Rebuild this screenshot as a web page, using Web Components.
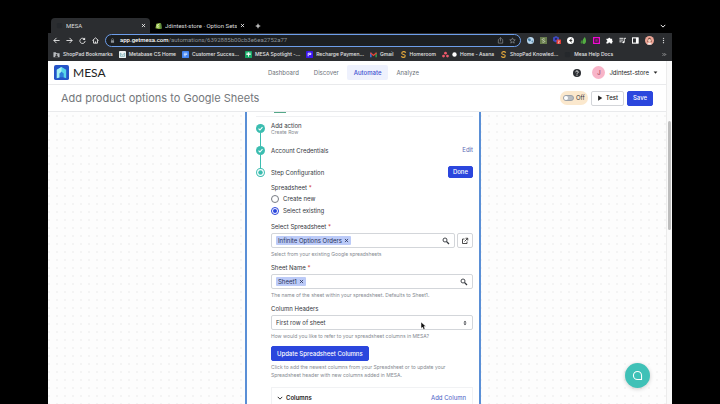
<!DOCTYPE html>
<html lang="en">
<head>
<meta charset="utf-8">
<title>MESA</title>
<style>
  body {
    margin:0;
    background:#000;
    font-family:Inter, "Liberation Sans", sans-serif;
    font-size:6px;
    line-height:10px;
    color:#33373d;
  }
</style>
</head>
<body>
<browser-window></browser-window>

<script>
const icons = {
  back: '<path d="M15 8H2M8 2L2 8l6 6" fill="none" stroke="currentColor" stroke-width="2"/>',
  forward: '<path d="M1 8h13M8 2l6 6-6 6" fill="none" stroke="currentColor" stroke-width="2"/>',
  reload: '<path d="M13 5.500A6 6 0 1 0 14 9" fill="none" stroke="currentColor" stroke-width="2"/><path d="M14 1v6H8z" fill="currentColor"/>',
  home: '<path d="M1 8l7-6 7 6M3.500 7v7h9V7M8 14v-4" fill="none" stroke="currentColor" stroke-width="2"/>',
  lock: '<rect x="3" y="7" width="10" height="8" rx="1" fill="currentColor"/><path d="M5 7V5a3 3 0 0 1 6 0v2" fill="none" stroke="currentColor" stroke-width="2"/>',
  share: '<path d="M5 6H3v8h10V6h-2M8 10V2M5 4l3-3 3 3" fill="none" stroke="currentColor" stroke-width="1.500"/>',
  star: '<path d="M8 2l1.800 4.200 4.500.3-3.400 3 1 4.500L8 11.600 4.100 14l1-4.500-3.400-3 4.500-.3z" fill="none" stroke="currentColor" stroke-width="1.500"/>',
  close: '<path d="M3 3l10 10M13 3L3 13" stroke="currentColor" stroke-width="2.500"/>',
  plus: '<path d="M8 2v12M2 8h12" stroke="currentColor" stroke-width="2.500"/>',
  down: '<path d="M2 5l6 6 6-6" fill="none" stroke="currentColor" stroke-width="2.500"/>',
  caret: '<path d="M2 5h12l-6 7z" fill="currentColor"/>',
  folder: '<path d="M1 3h5l2 2h7v9H1z" fill="#b9bcc0"/><circle cx="8" cy="9" r="2" fill="#333"/><path d="M4.500 14a3.500 3 0 0 1 7 0z" fill="#333"/>',
  mail: '<rect width="16" height="16" rx="1" fill="#eef3f4"/><path d="M3 5l5 4 5-4M3 5v7h10V5" fill="none" stroke="#5a9ca5" stroke-width="1.500"/>',
  doc: '<rect width="16" height="16" rx="2" fill="#4285f4"/><path d="M4 5h8M4 8h8M4 11h5" stroke="#fff" stroke-width="1.500"/>',
  sheet: '<rect width="16" height="16" rx="2" fill="#16a765"/><path d="M8 3v10M3 8h10M3 5h10" stroke="#fff" stroke-width="2"/>',
  recharge: '<rect width="16" height="16" rx="2" fill="#3b16ee"/><path d="M5 12V5h6v3H7" fill="none" stroke="#fff" stroke-width="2"/>',
  gmail: '<path d="M2 14V4" stroke="#4285f4" stroke-width="3"/><path d="M14 14V4" stroke="#34a853" stroke-width="3"/><path d="M1 4l7 6 7-6" fill="none" stroke="#ea4335" stroke-width="3"/>',
  ess: '<path d="M13 4C11 0 4 1 4 5c0 4 8 2 8 6s-7 5-9 1" fill="none" stroke="#e5a93c" stroke-width="2.500"/><path d="M4 15h8" stroke="#e5a93c"/>',
  asana: '<g fill="#f0596a"><circle cx="8" cy="5" r="3.200"/><circle cx="3.500" cy="11.500" r="3.200"/><circle cx="12.500" cy="11.500" r="3.200"/></g>',
  dot: '<circle cx="8" cy="8" r="7" fill="#fff"/>',
  blank: '<rect x="2" y="2" width="12" height="12" rx="3" fill="#25282c"/>',
  shopify: '<path d="M3 4l8-2 3 2 1 11-6 1-8-2z" fill="#95bf47"/><path d="M11 2l3 2 1 11-4 1z" fill="#5e8e3e"/><path d="M9 6c-5-1-4 3-2 4s0 3-3 1" fill="none" stroke="#fff" stroke-width="1.500"/>',
  globe: '<circle cx="8" cy="8" r="8" fill="#b9d6ec"/><path d="M3 3l5 1 1 4-3 2-4-3zM10 9l4-1-2 5z" fill="#45799c"/>',
  square: '<rect width="16" height="16" fill="#667b4c"/><path d="M11 5c-2-2-6-1-6 1s6 2 6 4-4 3-6 1" fill="none" stroke="#e8eedb" stroke-width="1.500"/>',
  badge: '<path d="M6 0l6 3v7l-6 3-6-3V3z" fill="#3e49bd"/><circle cx="6" cy="6" r="2" fill="#171b50"/><rect x="7" y="7" width="9" height="9" rx="1" fill="#e23c37"/><path d="M10 10h3l-3 4h3" stroke="#fff" fill="none"/>',
  chat: '<circle cx="8" cy="8" r="8" fill="#fff"/><path d="M11 4L6 8l5 4M6 8h6" fill="none" stroke="#222" stroke-width="2"/>',
  leaf: '<path d="M11 0c4 6 4 15-2 16C4 16 4 8 11 0z" fill="#54ae43"/><path d="M5 6c-5 5-4 9 0 9z" fill="#3e8933"/>',
  frame: '<rect x="1.500" y="1.500" width="13" height="13" fill="#23121f" stroke="#ed0bd0" stroke-width="3"/><path d="M5 5h6v6H5z" fill="#8b247c"/>',
  puzzle: '<path d="M1 4h4a2.500 2.500 0 0 1 5 0h4v4a2.500 2.500 0 0 1 0 4v3h-4a2 2 0 0 0-5 0H1v-4a2 2 0 0 0 0-4z" fill="#fff"/>',
  playlist: '<path d="M1 3h9M1 7h8M1 11h5M12 12V3h4" fill="none" stroke="#fff" stroke-width="2"/><circle cx="10" cy="12" r="2.500" fill="#fff"/>',
  panel: '<rect x="1" y="2" width="13" height="12" fill="none" stroke="#fff" stroke-width="2.500"/><path d="M9 2h5v12H9z" fill="#fff"/>',
  face: '<circle cx="8" cy="8" r="8" fill="#eda596"/><path d="M5 6c1-4 5-4 6 0l1 5-2-1V7H6v3l-2 1z" fill="#73483d"/><circle cx="8" cy="8" r="2.500" fill="#f5d2c0"/><path d="M4 15c1-4 7-4 8 0z" fill="#f0f0f0"/>',
  more: '<g fill="#ddd"><circle cx="8" cy="3" r="1.500"/><circle cx="8" cy="8" r="1.500"/><circle cx="8" cy="13" r="1.500"/></g>',
  chevrons: '<path d="M2 4l4 4-4 4M8 4l4 4-4 4" fill="none" stroke="#ddd" stroke-width="2"/>',
  logo: '<rect width="16" height="16" rx="2" fill="#2554c7"/><path d="M3 5l5-3 5 3v9l-3-1V9H6v4l-3 1z" fill="#58d6e8"/><path d="M3 5l5-3v7H6v4l-3 1z" fill="#a5f0f2"/><path d="M6 9l2-2 2 2v4H6z" fill="#2d7edb"/>',
  help: '<circle cx="8" cy="8" r="8" fill="#2c2f33"/><path d="M5.500 6.500c0-4 5.500-3 5 0C10 8 8 8 8 9.500" fill="none" stroke="#fff" stroke-width="1.800"/><circle cx="8" cy="12.200" r="1.200" fill="#fff"/>',
  play: '<path d="M3 1l11 7-11 7z" fill="currentColor"/>',
  check: '<circle cx="8" cy="8" r="8" fill="#3bbdb0"/><path d="M4.500 8.200l2.500 2.500 4.500-5" fill="none" stroke="#fff" stroke-width="2"/>',
  current: '<circle cx="8" cy="8" r="7" fill="#fff" stroke="#3bbdb0" stroke-width="1.800"/><circle cx="8" cy="8" r="4" fill="#3bbdb0"/>',
  search: '<circle cx="6" cy="6" r="4" fill="none" stroke="currentColor" stroke-width="1.800"/><path d="M9 9l5 5" stroke="currentColor" stroke-width="2.500"/>',
  external: '<path d="M7 4H3v9h9V9M9 2.500h4.500V7M13 3L7 9" fill="none" stroke="currentColor" stroke-width="1.600"/>',
  updown: '<path d="M4 6.500L8 2l4 4.500zM4 9.500L8 14l4-4.500z" fill="currentColor"/>',
  pointer: '<path d="M4 0v13l3-3 2 5 3-1-2-5h4z" fill="#111" stroke="#fff"/>',
  bubble: '<path d="M13 13H8a5 5 0 1 1 5-5z" fill="none" stroke="#fff" stroke-width="1.300" stroke-linejoin="round"/>'
};

// <ui-icon name="search" size="7">
class UiIcon extends HTMLElement {
  constructor() {
    super();
    this.attachShadow({ mode: 'open' });
  }
  connectedCallback() {
    const size = this.getAttribute('size') || 7;
    this.shadowRoot.innerHTML = `
      <style>
        :host { display:inline-flex; flex:none; }
        svg { display:block; }
      </style>
      <svg width="${size}" height="${size}" viewBox="0 0 16 16" aria-hidden="true">${icons[this.getAttribute('name')]}</svg>
    `;
  }
}

class BrowserTab extends HTMLElement {
  constructor() {
    super();
    this.attachShadow({ mode: 'open' });
    this.shadowRoot.innerHTML = `
      <style>
        :host {
          display:flex;
          align-items:center;
          gap:3px;
          box-sizing:border-box;
          width:99px;
          height:15px;
          padding:0 4px 0 5px;
          border-radius:4px 4px 0 0;
          color:#ddd;
        }
        :host([active]) { background:#2b2d30; }
        span { flex:1; overflow:hidden; white-space:nowrap; }
        button { display:flex; padding:0; border:0; background:none; color:#fff; }
      </style>
      <slot name="icon"></slot>
      <span><slot></slot></span>
      <button aria-label="Close tab"><ui-icon name="close" size="5"></ui-icon></button>
    `;
  }
}

class BookmarkLink extends HTMLElement {
  constructor() {
    super();
    this.attachShadow({ mode: 'open' });
  }
  connectedCallback() {
    this.shadowRoot.innerHTML = `
      <style>
        :host { display:block; }
        a { display:flex; align-items:center; gap:3px; color:#e4e4e4; text-decoration:none; white-space:nowrap; }
      </style>
      <a href="#"><ui-icon name="${this.getAttribute('icon')}"></ui-icon><slot></slot></a>
    `;
  }
}

class BrowserChrome extends HTMLElement {
  constructor() {
    super();
    this.attachShadow({ mode: 'open' });
    this.shadowRoot.innerHTML = `
      <style>
        :host { display:block; font-family:Roboto, "Liberation Sans", sans-serif; }
        .tabs { display:flex; align-items:center; padding:18px 6px 0 3px; color:#fff; }
        .tabs .new { margin-left:6px; }
        .tabs .list { margin-left:auto; }
        .toolbar { display:flex; align-items:center; gap:6px; height:14px; padding:0 5px; background:#2b2d30; color:#eee; }
        .toolbar button, .tabs > button { display:flex; padding:0; border:0; background:none; color:inherit; }
        .address {
          flex:1;
          display:flex;
          align-items:center;
          gap:5px;
          box-sizing:border-box;
          height:13px;
          padding:0 4px;
          border:1px solid #6d9eeb;
          border-radius:7px;
          background:#1c1f22;
          color:#8f9499;
        }
        .address .url { flex:1; }
        .address b { color:#fff; font-weight:500; }
        .bookmarks {
          display:flex;
          align-items:center;
          gap:6px;
          height:14px;
          padding:0 5px;
          background:#2b2d30;
          font-family:Inter, "Liberation Sans", sans-serif;
          font-size:5px;
          font-weight:500;
        }
        .bookmarks .end { margin-left:auto; }
      </style>
      <div class="tabs">
        <browser-tab active><ui-icon slot="icon" name="blank"></ui-icon>MESA</browser-tab>
        <browser-tab><ui-icon slot="icon" name="shopify"></ui-icon>Jdintest-store · Option Sets · S</browser-tab>
        <button class="new" aria-label="New tab"><ui-icon name="plus" size="6"></ui-icon></button>
        <button class="list" aria-label="Tab list"><ui-icon name="down" size="6"></ui-icon></button>
      </div>
      <div class="toolbar">
        <button aria-label="Back"><ui-icon name="back"></ui-icon></button>
        <button aria-label="Forward"><ui-icon name="forward"></ui-icon></button>
        <button aria-label="Reload"><ui-icon name="reload"></ui-icon></button>
        <button aria-label="Home"><ui-icon name="home"></ui-icon></button>
        <div class="address">
          <ui-icon name="lock" size="5"></ui-icon>
          <span class="url"><b>app.getmesa.com</b>/automations/6392885b00cb3e6ea2752a77</span>
          <ui-icon name="share"></ui-icon>
          <ui-icon name="star"></ui-icon>
        </div>
        <ui-icon name="globe"></ui-icon>
        <ui-icon name="square"></ui-icon>
        <ui-icon name="badge" size="8"></ui-icon>
        <ui-icon name="chat"></ui-icon>
        <ui-icon name="leaf"></ui-icon>
        <ui-icon name="frame"></ui-icon>
        <ui-icon name="puzzle"></ui-icon>
        <ui-icon name="playlist"></ui-icon>
        <ui-icon name="panel"></ui-icon>
        <ui-icon name="face" size="9"></ui-icon>
        <ui-icon name="more"></ui-icon>
      </div>
      <div class="bookmarks">
        <bookmark-link icon="folder">ShopPad Bookmarks</bookmark-link>
        <bookmark-link icon="mail">Metabase CS Home</bookmark-link>
        <bookmark-link icon="doc">Customer Succes...</bookmark-link>
        <bookmark-link icon="sheet">MESA Spotlight -...</bookmark-link>
        <bookmark-link icon="recharge">Recharge Paymen...</bookmark-link>
        <bookmark-link icon="gmail">Gmail</bookmark-link>
        <bookmark-link icon="ess">Homeroom</bookmark-link>
        <bookmark-link icon="asana"><ui-icon name="dot" size="5"></ui-icon> Home - Asana</bookmark-link>
        <bookmark-link icon="ess">ShopPad Knowled...</bookmark-link>
        <bookmark-link icon="blank">Mesa Help Docs</bookmark-link>
        <ui-icon class="end" name="chevrons" size="5"></ui-icon>
      </div>
    `;
  }
}

class MesaNav extends HTMLElement {
  constructor() {
    super();
    this.attachShadow({ mode: 'open' });
    this.shadowRoot.innerHTML = `
      <style>
        :host {
          display:flex;
          align-items:center;
          justify-content:space-between;
          height:23px;
          padding:0 8px 0 6px;
          border-bottom:1px solid #e9eaec;
          background:#fff;
        }
        .logo { display:flex; align-items:center; gap:4px; color:#222; text-decoration:none; font:12px Lato, sans-serif; }
        nav { display:flex; gap:1px; margin-left:8px; }
        nav a { padding:2px 7px; border-radius:2px; line-height:11px; color:#6c7178; text-decoration:none; }
        nav a.active { background:#eef1fd; color:#3b4fd0; font-weight:500; }
        .account { display:flex; align-items:center; gap:5px; }
        .account button { display:flex; align-items:center; gap:4px; padding:0; border:0; background:none; font:inherit; color:#222; }
        .help { margin-right:6px; }
        .avatar { flex:none; width:13px; border-radius:50%; background:#f8b4c8; line-height:13px; text-align:center; color:#8a2846; }
      </style>
      <a class="logo" href="#"><ui-icon name="logo" size="15"></ui-icon>MESA</a>
      <nav>
        <a href="#">Dashboard</a>
        <a href="#">Discover</a>
        <a href="#" class="active">Automate</a>
        <a href="#">Analyze</a>
      </nav>
      <div class="account">
        <button class="help" aria-label="Help"><ui-icon name="help" size="8"></ui-icon></button>
        <button><span class="avatar">J</span>Jdintest-store<ui-icon name="caret" size="5"></ui-icon></button>
      </div>
    `;
  }
}

class UiButton extends HTMLElement {
  constructor() {
    super();
    this.attachShadow({ mode: 'open' });
    this.shadowRoot.innerHTML = `
      <style>
        :host { display:inline-flex; }
        button {
          display:flex;
          align-items:center;
          justify-content:center;
          gap:3px;
          box-sizing:border-box;
          height:15px;
          padding:0 5px;
          border:1px solid #d3d5d9;
          border-radius:2px;
          background:#fff;
          color:#222;
          font:inherit;
          font-weight:500;
        }
        :host([primary]) button { border-color:#2b46dd; background:#2b46dd; color:#fff; }
        :host([small]) button { height:12px; padding:0 4px; }
        :host([square]) button { width:16px; padding:0; }
      </style>
      <button><slot></slot></button>
    `;
  }
}

class TitleBar extends HTMLElement {
  constructor() {
    super();
    this.attachShadow({ mode: 'open' });
    this.shadowRoot.innerHTML = `
      <style>
        :host {
          display:flex;
          align-items:center;
          gap:3px;
          height:26px;
          padding:0 13px;
          border-bottom:1px solid #e9eaec;
          background:#fff;
        }
        h1 { flex:1; margin:0; font-size:11px; font-weight:400; line-height:16px; color:#74777b; }
        label { display:flex; align-items:center; gap:2px; height:14px; padding:0 3px; border-radius:7px; background:#fbe8cd; }
        input {
          appearance:none;
          display:flex;
          align-items:center;
          box-sizing:border-box;
          width:11px;
          height:6px;
          margin:0;
          border:1px solid #9ba1a8;
          border-radius:3px;
          background:#b8bcc1;
        }
        input::before { content:""; width:4px; height:4px; border-radius:50%; background:#fff; }
      </style>
      <h1>Add product options to Google Sheets</h1>
      <label><input type="checkbox" role="switch">Off</label>
      <ui-button><ui-icon name="play" size="6"></ui-icon>Test</ui-button>
      <ui-button primary>Save</ui-button>
    `;
  }
}

class StepItem extends HTMLElement {
  constructor() {
    super();
    this.attachShadow({ mode: 'open' });
  }
  connectedCallback() {
    this.shadowRoot.innerHTML = `
      <style>
        :host { display:flex; align-items:center; gap:6px; height:22px; }
        .rail { display:flex; flex-direction:column; align-items:center; align-self:stretch; width:9px; }
        .rail::before, .rail::after { content:""; flex:1; width:1px; background:#3bbdb0; }
        :host(:first-of-type) .rail::before, :host(:last-of-type) .rail::after { background:none; }
        .text { flex:1; line-height:7px; }
        small { display:block; font-size:5px; line-height:6px; color:#858a91; }
      </style>
      <div class="rail"><ui-icon name="${this.getAttribute('icon')}" size="9"></ui-icon></div>
      <div class="text"><slot></slot><small>${this.getAttribute('detail') || ''}</small></div>
      <slot name="action"></slot>
    `;
    if (!this.hasAttribute('detail')) this.shadowRoot.querySelector('small').remove();
  }
}

// text box with a value tag, or a drop-down when "option" is given
class FormField extends HTMLElement {
  constructor() {
    super();
    this.attachShadow({ mode: 'open' });
  }
  connectedCallback() {
    const option = this.getAttribute('option');
    const tag = this.getAttribute('tag');
    const required = this.hasAttribute('required') ? ' <i>*</i>' : '';
    const control = option
      ? `<select id="control"><option>${option}</option></select><ui-icon name="updown" size="6"></ui-icon>`
      : `<span class="tag">${tag}<button aria-label="Remove ${tag}"><ui-icon name="close" size="5"></ui-icon></button></span>
         <input id="control" type="text"><ui-icon name="search" size="8"></ui-icon>`;
    this.shadowRoot.innerHTML = `
      <style>
        :host { display:block; margin-bottom:4px; }
        label { display:block; margin-bottom:1px; }
        i { color:#d02b20; font-style:normal; }
        .row { display:flex; gap:2px; margin-bottom:1px; }
        .box {
          flex:1;
          display:flex;
          align-items:center;
          box-sizing:border-box;
          height:15px;
          padding:0 4px;
          border:1px solid #d3d6da;
          border-radius:2px;
          background:#fff;
        }
        .tag { display:flex; align-items:center; gap:2px; padding:0 2px; border-radius:1px; background:#bccbf8; line-height:9px; color:#283258; }
        .tag button { display:flex; padding:0; border:0; background:none; color:inherit; }
        input, select { flex:1; min-width:0; padding:0; border:0; outline:0; background:none; font:inherit; color:inherit; }
        select { appearance:none; }
        .hint { font-size:5px; color:#858a91; }
      </style>
      <label for="control">${this.getAttribute('label')}${required}</label>
      <div class="row"><div class="box">${control}</div><slot name="after"></slot></div>
      <div class="hint"><slot></slot></div>
    `;
  }
}

class RadioGroup extends HTMLElement {
  constructor() {
    super();
    this.attachShadow({ mode: 'open' });
    this.shadowRoot.innerHTML = `
      <style>
        :host { display:block; margin-bottom:5px; }
        fieldset { margin:0; padding:0; border:0; }
        legend { padding:0; }
        legend i { color:#d02b20; font-style:normal; }
        label { display:flex; align-items:center; gap:4px; height:12px; }
        input {
          appearance:none;
          display:flex;
          align-items:center;
          justify-content:center;
          box-sizing:border-box;
          width:8px;
          height:8px;
          margin:0;
          border:1px solid #777c83;
          border-radius:50%;
          background:#fff;
        }
        input:checked { border-color:#2b46dd; }
        input:checked::before { content:""; width:4px; height:4px; border-radius:50%; background:#2b46dd; }
      </style>
      <fieldset>
        <legend>Spreadsheet <i>*</i></legend>
        <label><input type="radio" name="source">Create new</label>
        <label><input type="radio" name="source" checked>Select existing</label>
      </fieldset>
    `;
  }
}

class ColumnsPanel extends HTMLElement {
  constructor() {
    super();
    this.attachShadow({ mode: 'open' });
    this.shadowRoot.innerHTML = `
      <style>
        :host {
          display:flex;
          align-items:center;
          justify-content:space-between;
          height:20px;
          margin-top:8px;
          padding:0 6px 0 5px;
          border:solid #f1f2f4;
          border-width:1px 1px 0;
        }
        button { display:flex; align-items:center; gap:3px; padding:0; border:0; background:none; color:#222; font:inherit; font-weight:600; }
        a { color:#4a5cc5; text-decoration:none; }
      </style>
      <button><ui-icon name="down" size="6"></ui-icon>Columns</button>
      <a href="#">Add Column</a>
    `;
  }
}

class StepCard extends HTMLElement {
  constructor() {
    super();
    this.attachShadow({ mode: 'open' });
    this.shadowRoot.innerHTML = `
      <style>
        :host {
          display:block;
          box-sizing:border-box;
          width:236px;
          min-height:100%;
          padding:0 6px 0 9px;
          border:solid #5a8fd6;
          border-width:0 2px;
          background:#fff;
        }
        .top { height:4px; border-bottom:1px solid #f0f1f3; }
        .top::before { content:""; display:block; width:12px; height:1px; margin-left:18px; background:#55a889; }
        .config { padding-left:15px; }
        a { color:#5b69b5; text-decoration:none; }
        p { margin:2px 0 0; max-width:180px; font-size:5px; line-height:8px; color:#858a91; }
        .update { margin-top:1px; }
      </style>
      <div class="top"></div>
      <step-item icon="check" detail="Create Row">Add action</step-item>
      <step-item icon="check">Account Credentials<a slot="action" href="#">Edit</a></step-item>
      <step-item icon="current">Step Configuration<ui-button slot="action" primary small>Done</ui-button></step-item>
      <div class="config">
        <radio-group></radio-group>
        <form-field label="Select Spreadsheet" required tag="Infinite Options Orders">
          Select from your existing Google spreadsheets
          <ui-button slot="after" square aria-label="Open spreadsheet"><ui-icon name="external" size="8"></ui-icon></ui-button>
        </form-field>
        <form-field label="Sheet Name" required tag="Sheet1">The name of the sheet within your spreadsheet. Defaults to Sheet1.</form-field>
        <form-field label="Column Headers" option="First row of sheet">How would you like to refer to your spreadsheet columns in MESA?</form-field>
        <ui-button class="update" primary>Update Spreadsheet Columns</ui-button>
        <p>Click to add the newest columns from your Spreadsheet or to update your Spreadsheet header with new columns added in MESA.</p>
        <columns-panel></columns-panel>
      </div>
    `;
  }
}

class BrowserWindow extends HTMLElement {
  constructor() {
    super();
    this.attachShadow({ mode: 'open' });
    this.shadowRoot.innerHTML = `
      <style>
        :host { display:flex; flex-direction:column; box-sizing:border-box; height:100vh; padding:0 48px; overflow:hidden; }
        .page { flex:1; display:flex; min-height:0; background:#fdfdfd; }
        main { flex:1; display:flex; flex-direction:column; min-width:0; }
        .canvas {
          flex:1;
          display:flex;
          justify-content:center;
          min-height:0;
          padding-left:12px;
          overflow:hidden;
          background:radial-gradient(circle at 4px 4px, #f4f4f4 1px, transparent 1px) 5px 0 / 8px 8px #fdfdfd;
        }
        .scroll { width:5px; border-left:1px solid #ececec; background:#fafafa; }
        .scroll::before { content:""; display:block; width:3px; height:109px; margin:60px 1px 0; border-radius:2px; background:#bebebe; }
        .chat {
          position:absolute;
          right:70px;
          bottom:16px;
          display:flex;
          align-items:center;
          justify-content:center;
          width:25px;
          height:25px;
          padding:0;
          border:0;
          border-radius:50%;
          background:#3fc1b7;
          box-shadow:0 1px 4px #0003;
        }
        .pointer { position:absolute; left:419px; top:322px; }
      </style>
      <browser-chrome></browser-chrome>
      <div class="page">
        <main>
          <mesa-nav></mesa-nav>
          <title-bar></title-bar>
          <div class="canvas"><step-card></step-card></div>
        </main>
        <div class="scroll"></div>
      </div>
      <button class="chat" aria-label="Chat"><ui-icon name="bubble" size="13"></ui-icon></button>
      <ui-icon class="pointer" name="pointer" size="8"></ui-icon>
    `;
  }
}

customElements.define('ui-icon', UiIcon);
customElements.define('ui-button', UiButton);
customElements.define('browser-tab', BrowserTab);
customElements.define('bookmark-link', BookmarkLink);
customElements.define('browser-chrome', BrowserChrome);
customElements.define('mesa-nav', MesaNav);
customElements.define('title-bar', TitleBar);
customElements.define('step-item', StepItem);
customElements.define('form-field', FormField);
customElements.define('radio-group', RadioGroup);
customElements.define('columns-panel', ColumnsPanel);
customElements.define('step-card', StepCard);
customElements.define('browser-window', BrowserWindow);
</script>
</body>
</html>
